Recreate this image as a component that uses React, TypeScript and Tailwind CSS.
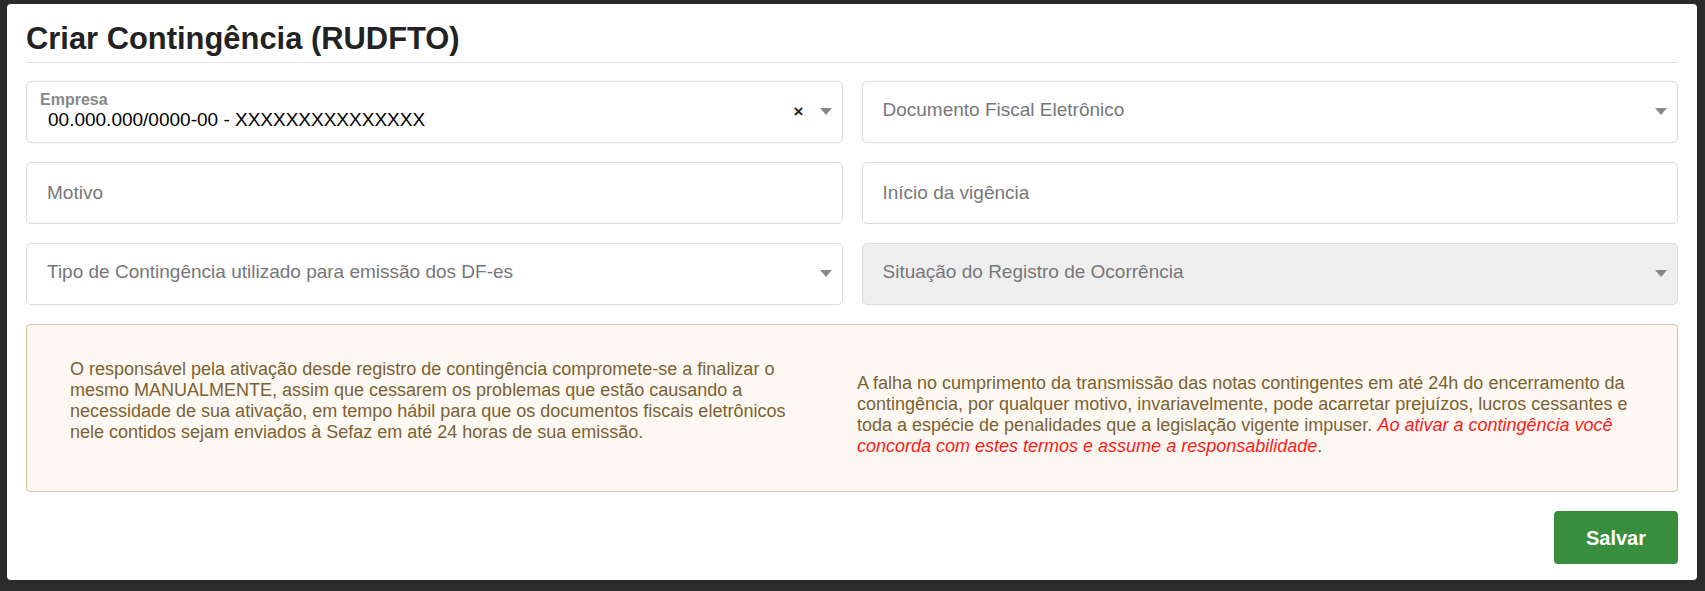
import React from "react";

const font = { fontFamily: '"Liberation Sans", Arial, Helvetica, sans-serif' };

function Caret() {
  return (
    <svg width="12" height="7" viewBox="0 0 12 7" className="shrink-0">
      <path d="M0 0 L12 0 L6 7 Z" fill="#888" />
    </svg>
  );
}

function SelectBox({ placeholder, disabled }: { placeholder: string; disabled?: boolean }) {
  return (
    <div
      className={`h-[62px] rounded-[5px] border border-[#dcdcdc] flex items-center pl-[20px] pr-[10px] ${
        disabled ? "bg-[#eeeeee]" : "bg-white"
      }`}
    >
      <span className="flex-1 text-[19px] text-[#777] -mt-[4px]">{placeholder}</span>
      <span className="-mt-[2px]">
        <Caret />
      </span>
    </div>
  );
}

function InputBox({ placeholder }: { placeholder: string }) {
  return (
    <div className="h-[62px] rounded-[5px] border border-[#dcdcdc] bg-white flex items-center pl-[20px] pr-[10px]">
      <span className="text-[19px] text-[#777]">{placeholder}</span>
    </div>
  );
}

export default function App() {
  return (
    <div className="min-h-screen bg-[#2b2b2b] pt-[4px] pl-[7px] pr-[8px] pb-[11px]" style={font}>
      <div className="bg-white rounded-[4px] px-[19px] pt-[20px] pb-[16px]">
        <h3 className="text-[30.9px] leading-[30px] font-bold text-[#222]">Criar Contingência (RUDFTO)</h3>
        <div className="mt-[8px] h-px bg-[#dddddd]" />

        <div className="mt-[18px] grid grid-cols-2 gap-[19px]">
          {/* Empresa */}
          <div className="h-[62px] rounded-[5px] border border-[#dcdcdc] bg-white flex items-center pl-[13px] pr-[10px]">
            <div className="flex-1 flex flex-col self-start pt-[10px]">
              <span className="text-[16px] leading-[16px] font-bold text-[#888]">Empresa</span>
              <span className="mt-[2px] pl-[8px] text-[19px] leading-[19px] text-black">
                00.000.000/0000-00 - XXXXXXXXXXXXXXX
              </span>
            </div>
            <span className="text-[17px] font-bold text-[#222] mr-[16px] -mt-[1px]">×</span>
            <span className="-mt-[2px]">
              <Caret />
            </span>
          </div>
          <SelectBox placeholder="Documento Fiscal Eletrônico" />

          <InputBox placeholder="Motivo" />
          <InputBox placeholder="Início da vigência" />

          <SelectBox placeholder="Tipo de Contingência utilizado para emissão dos DF-es" />
          <SelectBox placeholder="Situação do Registro de Ocorrência" disabled />
        </div>

        <div className="mt-[19px] h-[168px] rounded-[4px] border border-[#d6c59e] bg-[#fdf8f1] flex items-center text-[18px] leading-[21px] text-[#7a6233]">
          <p className="w-[730px] ml-[43px] mb-[14px]">
            O responsável pela ativação desde registro de contingência compromete-se a finalizar o mesmo
            MANUALMENTE, assim que cessarem os problemas que estão causando a necessidade de sua ativação, em
            tempo hábil para que os documentos fiscais eletrônicos nele contidos sejam enviados à Sefaz em até 24
            horas de sua emissão.
          </p>
          <p className="flex-1 ml-[57px] pr-[20px] mt-[14px]">
            A falha no cumprimento da transmissão das notas contingentes em até 24h do encerramento da
            contingência, por qualquer motivo, invariavelmente, pode acarretar prejuízos, lucros cessantes e toda
            a espécie de penalidades que a legislação vigente impuser.{" "}
            <em className="text-[#ff1a1a]">
              Ao ativar a contingência você concorda com estes termos e assume a responsabilidade
            </em>
            .
          </p>
        </div>

        <div className="mt-[19px] flex justify-end">
          <button className="w-[124px] h-[53px] rounded-[4px] bg-[#388e3c] text-white text-[20px] font-bold">
            Salvar
          </button>
        </div>
      </div>
    </div>
  );
}
